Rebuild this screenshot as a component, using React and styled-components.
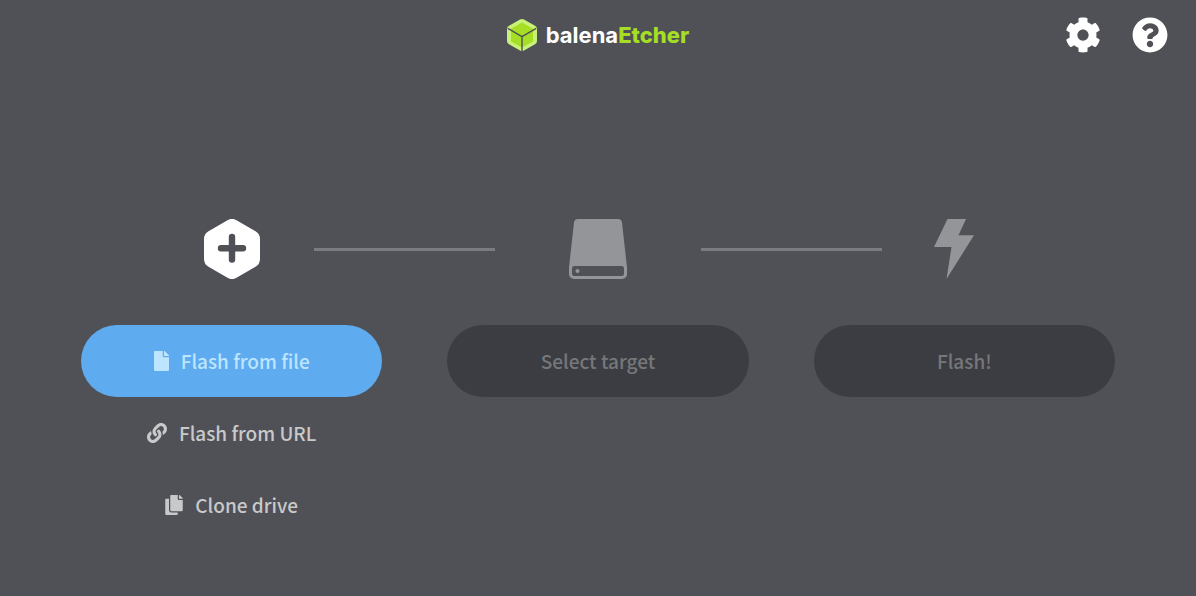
import React from 'react';
import styled, { createGlobalStyle } from 'styled-components';
import { FaCog, FaQuestionCircle, FaFile, FaLink, FaCopy } from 'react-icons/fa';

const GlobalStyle = createGlobalStyle`
  * { box-sizing: border-box; }
  body {
    margin: 0;
    background: #505156;
    font-family: "Noto Sans CJK SC", "Noto Sans", sans-serif;
  }
`;

const Page = styled.div`
  min-height: 100vh;
  display: flex;
  flex-direction: column;
`;

const Header = styled.header`
  display: grid;
  grid-template-columns: 1fr auto 1fr;
  align-items: center;
  height: 70px;
  padding: 0 28px;
`;

const Brand = styled.a`
  grid-column: 2;
  display: flex;
  align-items: center;
  gap: 9px;
  color: #ffffff;
  text-decoration: none;
`;

const BrandName = styled.span`
  font-family: Inter, sans-serif;
  font-size: 22px;
  line-height: 32px;
  font-weight: 700;
`;

const Product = styled.span`
  color: #a5de25;
  font-weight: 800;
`;

const Tools = styled.nav`
  display: flex;
  justify-content: flex-end;
  gap: 31px;
`;

const IconButton = styled.button`
  display: flex;
  padding: 0;
  border: 0;
  background: none;
  color: #ffffff;
  font-size: 36px;
  cursor: pointer;
`;

const Main = styled.main`
  padding: 149px 81px 0;
`;

const Progress = styled.div`
  display: flex;
  align-items: center;
  padding: 0 69px;
  margin-bottom: 46px;
`;

const StepIcon = styled.div`
  flex: none;
  width: ${(p) => (p.$wide ? 206 : 164)}px;
  display: flex;
  justify-content: center;
  color: ${(p) => (p.$active ? '#ffffff' : '#949599')};
`;

const Connector = styled.div`
  flex: 1;
  height: 3px;
  background: #7b7c80;
`;

const Steps = styled.div`
  display: grid;
  grid-template-columns: repeat(3, 1fr);
  gap: 65px;
`;

const Step = styled.section`
  display: flex;
  flex-direction: column;
`;

const StepButton = styled.button`
  display: flex;
  align-items: center;
  justify-content: center;
  gap: 12px;
  width: 100%;
  height: 72px;
  padding: 0 24px;
  border: 0;
  border-radius: 36px;
  background: ${(p) => (p.$primary ? '#5fabf0' : p.$plain ? 'none' : '#3c3d42')};
  color: ${(p) => (p.$primary ? '#bde5ff' : p.$plain ? '#c8c9cb' : '#76777a')};
  font-family: inherit;
  font-size: 19px;
  line-height: 28px;
  font-weight: 500;
  cursor: ${(p) => (p.disabled ? 'default' : 'pointer')};

  svg {
    flex: none;
    width: ${(p) => p.$iconWidth || 20}px;
    height: 20px;
  }
`;

const CubeLogo = () => (
  <svg width="30" height="32" viewBox="0 0 30 32" aria-hidden="true">
    <path d="M13 .6a4 4 0 0 1 4 0l11 6.2a3.600 3.600 0 0 1 2 3.200v12a3.600 3.600 0 0 1-2 3.200l-11 6.200a4 4 0 0 1-4 0L2 25.200A3.600 3.600 0 0 1 0 22V10a3.600 3.600 0 0 1 2-3.200z" fill="#c8f178" />
    <path d="M15 3.600 26 9.800v12.600L15 28.600 4 22.400V9.800z" fill="#a5de25" />
    <path d="M.8 9.400 15 17.600 29.200 9.400M15 17.600V32" fill="none" stroke="#505156" strokeWidth="1.400" />
  </svg>
);

const PlusHexagon = () => (
  <svg width="56" height="60" viewBox="0 0 56 60" aria-hidden="true">
    <path d="M23.500 1.200a9 9 0 0 1 9 0l19 11A9 9 0 0 1 56 20v20a9 9 0 0 1-4.500 7.800l-19 11a9 9 0 0 1-9 0l-19-11A9 9 0 0 1 0 40V20a9 9 0 0 1 4.500-7.800z" fill="currentColor" />
    <path d="M28 18v22.500M17 29.200h22" stroke="#505156" strokeWidth="6.400" strokeLinecap="round" />
  </svg>
);

const Drive = () => (
  <svg width="58" height="60" viewBox="0 0 58 60" aria-hidden="true">
    <path fillRule="evenodd" d="M9 0h40a4 4 0 0 1 4 3.500l5 45V55a5 5 0 0 1-5 5H5a5 5 0 0 1-5-5v-6.500l5-45A4 4 0 0 1 9 0zM5.500 47A2.500 2.500 0 0 0 3 49.500v5A2.500 2.500 0 0 0 5.500 57h47a2.500 2.500 0 0 0 2.500-2.500v-5a2.500 2.500 0 0 0-2.500-2.500z" fill="currentColor" />
    <circle cx="8.500" cy="52" r="2" fill="currentColor" />
  </svg>
);

const Bolt = () => (
  <svg width="60" height="60" viewBox="0 0 60 60" aria-hidden="true">
    <path d="M13.500 0H32l-7.500 16.300H40L12.500 60l5-32H0z" fill="currentColor" />
  </svg>
);

export default function App() {
  return (
    <Page>
      <GlobalStyle />
      <Header>
        <Brand href="#">
          <CubeLogo />
          <BrandName>balena<Product>Etcher</Product></BrandName>
        </Brand>
        <Tools>
          <IconButton type="button" aria-label="Settings"><FaCog /></IconButton>
          <IconButton type="button" aria-label="Help"><FaQuestionCircle /></IconButton>
        </Tools>
      </Header>
      <Main>
        <Progress>
          <StepIcon $active><PlusHexagon /></StepIcon>
          <Connector />
          <StepIcon $wide><Drive /></StepIcon>
          <Connector />
          <StepIcon><Bolt /></StepIcon>
        </Progress>
        <Steps>
          <Step>
            <StepButton type="button" $primary $iconWidth={15}><FaFile />Flash from file</StepButton>
            <StepButton type="button" $plain><FaLink />Flash from URL</StepButton>
            <StepButton type="button" $plain $iconWidth={18}><FaCopy />Clone drive</StepButton>
          </Step>
          <Step>
            <StepButton type="button" disabled>Select target</StepButton>
          </Step>
          <Step>
            <StepButton type="button" disabled>Flash!</StepButton>
          </Step>
        </Steps>
      </Main>
    </Page>
  );
}
